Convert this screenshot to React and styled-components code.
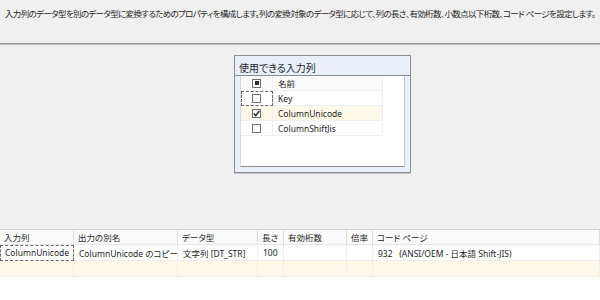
import styled, { createGlobalStyle } from 'styled-components';

const GlobalStyle = createGlobalStyle`
  html, body {
    margin: 0;
    padding: 0;
    background: #f0f0f0;
  }
  body {
    font-family: "Noto Sans", "Noto Sans CJK JP", sans-serif;
    font-size: 8.5px;
    color: #1e1e1e;
    font-feature-settings: "palt";
  }
`;

const Page = styled.div`
  width: 600px;
  height: 300px;
  display: flex;
  flex-direction: column;
  overflow: hidden;
`;

const Description = styled.div`
  height: 44px;
  box-sizing: border-box;
  padding: 7px 0 0 5px;
  white-space: nowrap;
  letter-spacing: -0.65px;
  border-bottom: 1px solid #9c9c9c;
  box-shadow: 0 1px 0 #bdbdbd;
`;

const Middle = styled.div`
  height: 183px;
  box-sizing: border-box;
  padding: 9px 0 0 234px;
  margin-top: 2px;
`;

const Panel = styled.div`
  width: 177px;
  height: 118px;
  box-sizing: border-box;
  border: 1px solid #8d8d8d;
  background: #e9eff9;
  display: flex;
  flex-direction: column;
  box-shadow: 0 1px 0 #c4c4c4;
`;

const PanelTitle = styled.div`
  height: 20px;
  box-sizing: border-box;
  border-bottom: 1px solid #8d8d8d;
  padding: 5px 0 0 4px;
  font-size: 10px;
  line-height: 14px;
`;

const ListFrame = styled.div`
  flex: 1;
  padding: 0 5px 5px 5px;
  display: flex;
`;

const ListBox = styled.div`
  flex: 1;
  background: #fff;
  border-left: 1px solid #d3dae6;
  border-right: 1px solid #c3cad6;
  border-bottom: 1px solid #8d8d8d;
`;

const ListGrid = styled.div`
  display: grid;
  grid-template-columns: 32px 110px;
  grid-auto-rows: 15px;
`;

const ListCell = styled.div`
  display: flex;
  align-items: center;
  justify-content: ${(p) => (p.$center ? 'center' : 'flex-start')};
  padding-left: ${(p) => (p.$center ? '0' : '5px')};
  box-sizing: border-box;
  background: ${(p) => (p.$selected ? '#fdf8e7' : p.$head ? '#fafafa' : '#fff')};
  border-right: 1px solid #efefef;
  border-bottom: 1px solid #efefef;
  outline: ${(p) => (p.$focus ? '1px dashed #6a6a6a' : 'none')};
  outline-offset: -1px;
  white-space: nowrap;
`;

const Box = styled.span`
  width: 9px;
  height: 9px;
  box-sizing: border-box;
  border: 1px solid #707070;
  background: #fff;
  display: flex;
  align-items: center;
  justify-content: center;
`;

const Dot = styled.span`
  width: 4px;
  height: 4px;
  background: #2a2a2a;
`;

const Check = ({ state }) => (
  <Box>
    {state === 'mixed' && <Dot />}
    {state === 'on' && (
      <svg width="7" height="7" viewBox="0 0 7 7">
        <path d="M0.8 3.6 L2.7 5.6 L6.3 1" stroke="#222" strokeWidth="1.4" fill="none" />
      </svg>
    )}
  </Box>
);

const Grid = styled.div`
  flex: 1;
  background: #fff;
  border-top: 1px solid #d2d2d2;
  display: grid;
  grid-template-columns: 74px 104px 80px 26px 63px 26px 1fr;
  grid-template-rows: 15px 16px 16px;
  align-content: start;
`;

const HeadCell = styled.div`
  background: #fafafa;
  border-right: 1px solid #dcdcdc;
  border-bottom: 1px solid #e6e6e6;
  padding-left: 4px;
  display: flex;
  align-items: center;
  white-space: nowrap;
`;

const DataCell = styled.div`
  background: ${(p) => (p.$new ? '#fdf8e7' : '#fff')};
  border-right: 1px solid #eeeeee;
  border-bottom: 1px solid #eeeeee;
  padding-left: 5px;
  box-sizing: border-box;
  display: flex;
  align-items: center;
  white-space: nowrap;
  outline: ${(p) => (p.$focus ? '1px dashed #6a6a6a' : 'none')};
  outline-offset: -1px;
`;

const headers = ['入力列', '出力の別名', 'データ型', '長さ', '有効桁数', '倍率', 'コード ページ'];
const row = ['ColumnUnicode', 'ColumnUnicode のコピー', '文字列 [DT_STR]', '100', '', '', '932\u00a0\u00a0\u00a0(ANSI/OEM - 日本語 Shift-JIS)'];

const columns = [
  { name: 'Key', state: 'off', focus: true },
  { name: 'ColumnUnicode', state: 'on', selected: true },
  { name: 'ColumnShiftJis', state: 'off' },
];

export default function App() {
  return (
    <Page>
      <GlobalStyle />
      <Description>
        入力列のデータ型を別のデータ型に変換するためのプロパティを構成します。列の変換対象のデータ型に応じて、列の長さ、有効桁数、小数点以下桁数、コード ページを設定します。
      </Description>
      <Middle>
        <Panel>
          <PanelTitle>使用できる入力列</PanelTitle>
          <ListFrame>
            <ListBox>
              <ListGrid>
                <ListCell $center $head><Check state="mixed" /></ListCell>
                <ListCell $head>名前</ListCell>
                {columns.map((c) => [
                  <ListCell key={c.name + 'c'} $center $focus={c.focus} $selected={c.selected}>
                    <Check state={c.state} />
                  </ListCell>,
                  <ListCell key={c.name} $selected={c.selected}>{c.name}</ListCell>,
                ])}
              </ListGrid>
            </ListBox>
          </ListFrame>
        </Panel>
      </Middle>
      <Grid>
        {headers.map((h) => <HeadCell key={h}>{h}</HeadCell>)}
        {row.map((v, i) => <DataCell key={i} $focus={i === 0}>{v}</DataCell>)}
        {headers.map((h) => <DataCell key={h + 'n'} $new />)}
      </Grid>
    </Page>
  );
}
